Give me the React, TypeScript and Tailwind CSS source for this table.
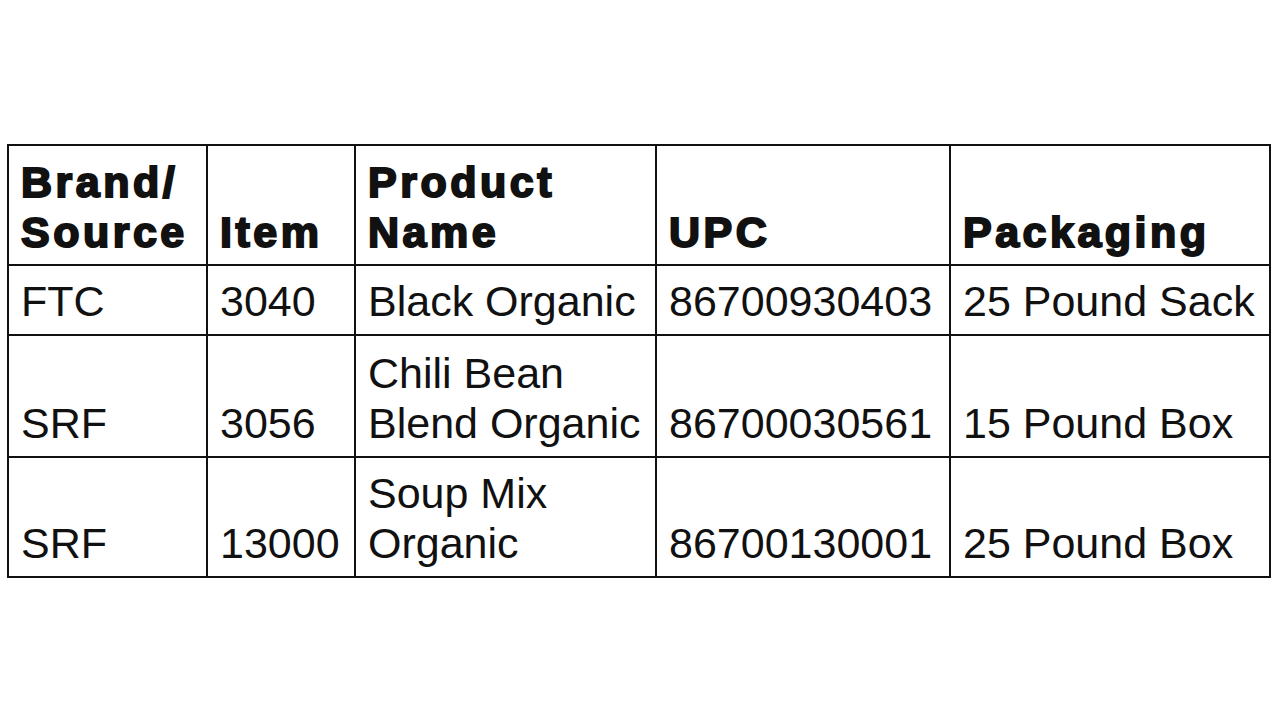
import React from "react";

const head = [
  ["Brand/", "Source"],
  ["Item"],
  ["Product", "Name"],
  ["UPC"],
  ["Packaging"],
];

const rows: string[][][] = [
  [["FTC"], ["3040"], ["Black Organic"], ["86700930403"], ["25 Pound Sack"]],
  [["SRF"], ["3056"], ["Chili Bean", "Blend Organic"], ["86700030561"], ["15 Pound Box"]],
  [["SRF"], ["13000"], ["Soup Mix", "Organic"], ["86700130001"], ["25 Pound Box"]],
];

const rowHeights = ["h-[70px]", "h-[122px]", "h-[120px]"];

const widths = ["w-[199px]", "w-[148px]", "w-[301px]", "w-[294px]", "w-[320px]"];

function Lines({ lines }: { lines: string[] }) {
  return (
    <>
      {lines.map((l, i) => (
        <React.Fragment key={i}>
          {i > 0 && <br />}
          {l}
        </React.Fragment>
      ))}
    </>
  );
}

export default function App() {
  return (
    <div className="w-[1280px] h-[720px] bg-white overflow-hidden">
      <div className="pt-[144px] pl-[7px]">
        <table
          className="border-collapse table-fixed w-[1264px] text-[#111] text-[43px] leading-[50px]"
          style={{ fontFamily: '"Liberation Sans", Arial, sans-serif' }}
        >
          <colgroup>
            {widths.map((w, i) => (
              <col key={i} className={w} />
            ))}
          </colgroup>
          <thead>
            <tr className="h-[120px]">
              {head.map((h, i) => (
                <th
                  key={i}
                  className="border-2 border-[#111] text-left align-bottom font-bold whitespace-nowrap pl-[12px] pr-[2px] pt-[10px] pb-[7px] tracking-[3.5px] [-webkit-text-stroke:2px_#111]"
                >
                  <Lines lines={h} />
                </th>
              ))}
            </tr>
          </thead>
          <tbody>
            {rows.map((r, ri) => (
              <tr key={ri} className={rowHeights[ri]}>
                {r.map((c, ci) => (
                  <td
                    key={ci}
                    className="border-2 border-[#111] text-left align-bottom font-normal whitespace-nowrap pl-[12px] pr-[2px] pt-[10px] pb-[8px]"
                  >
                    <Lines lines={c} />
                  </td>
                ))}
              </tr>
            ))}
          </tbody>
        </table>
      </div>
    </div>
  );
}
